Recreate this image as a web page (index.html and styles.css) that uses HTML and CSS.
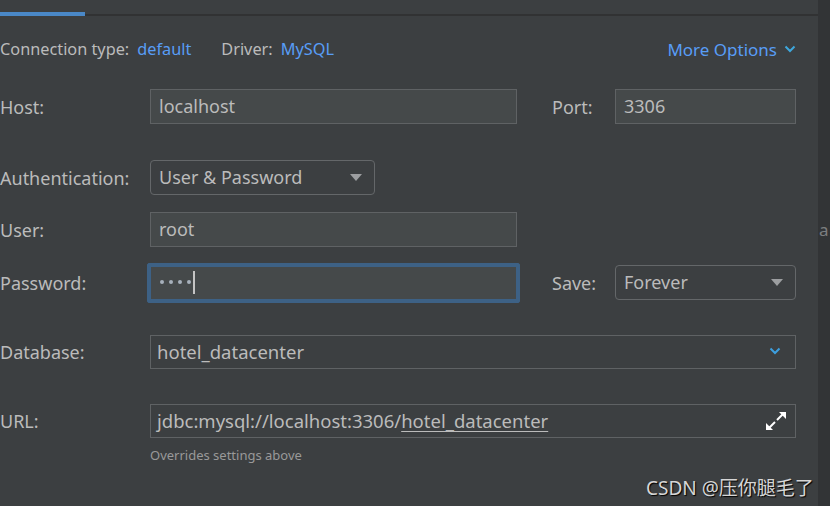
FILE: index.html
```html
<!DOCTYPE html>
<html>
  <head>
    <meta charset="utf-8"/>
    <title>Data Source</title>
    <link rel="stylesheet" href="styles.css">
  </head>
  <body>
  <div class="window">
    <div class="main">
      <div class="tabs">
        <div class="tab-active"></div>
        <div class="tab-line"></div>
      </div>

      <div class="typebar">
        <span class="lbl">Connection type:</span><span class="link">default</span>
        <span class="lbl driver">Driver:</span><span class="link">MySQL</span>
        <span class="more">More Options
          <svg width="12" height="8" viewBox="0 0 12 8"><path d="M1.5 1.5 L6 6 L10.5 1.5" fill="none" stroke="#3ea7dc" stroke-width="2"/></svg>
        </span>
      </div>

      <div class="row r-host">
        <label class="label">Host:</label>
        <div class="txt w-main">localhost</div>
        <label class="label side">Port:</label>
        <div class="txt w-side">3306</div>
      </div>

      <div class="row r-auth">
        <label class="label">Authentication:</label>
        <div class="sel w-auth">User &amp; Password<span class="tri"></span></div>
      </div>

      <div class="row r-user">
        <label class="label">User:</label>
        <div class="txt w-main">root</div>
      </div>

      <div class="row r-pass">
        <label class="label">Password:</label>
        <div class="focus">
          <div class="txt pass">
            <span class="dot"></span><span class="dot"></span><span class="dot"></span><span class="dot"></span><span class="caret"></span>
          </div>
        </div>
        <label class="label side">Save:</label>
        <div class="sel w-side">Forever<span class="tri"></span></div>
      </div>

      <div class="row r-db">
        <label class="label">Database:</label>
        <div class="combo w-wide">hotel_datacenter
          <svg class="chev" width="12" height="8" viewBox="0 0 12 8"><path d="M1.5 1.5 L6 6 L10.5 1.5" fill="none" stroke="#3d9fdf" stroke-width="2"/></svg>
        </div>
      </div>

      <div class="row r-url">
        <label class="label">URL:</label>
        <div class="combo w-wide">jdbc:mysql://localhost:3306/<u>hotel_datacenter</u>
          <svg class="expand" width="22" height="20" viewBox="0 0 22 20">
            <path d="M12 9 L18 3" stroke="#fff" stroke-width="2"/>
            <path d="M14 1 L21 1 L21 8 Z" fill="#fff"/>
            <path d="M10 11 L4 17" stroke="#fff" stroke-width="2"/>
            <path d="M1 12 L1 19 L8 19 Z" fill="#fff"/>
          </svg>
        </div>
      </div>
      <div class="hint">Overrides settings above</div>
    </div>
    <div class="strip"><span class="cut">a</span></div>
    <div class="watermark">CSDN @压你腿毛了</div>
  </div>
  </body>
</html>
```

FILE: styles.css
```css
body{
  margin: 0;
  background-color: #3c3f41;
  font-family: "Noto Sans", "Noto Sans CJK SC", sans-serif;
  font-size: 18px;
  color: #bbbbbb;
}
.window{
  display: flex;
  width: 830px;
  height: 506px;
  overflow: hidden;
  position: relative;
}
.main{
  width: 818px;
}
.strip{
  width: 12px;
  background-color: #323436;
  padding-top: 218px;
}
.cut{
  display: block;
  margin-left: 1px;
  color: #7c7e80;
  font-size: 17px;
}
.tabs{
  display: flex;
  height: 16px;
}
.tab-active{
  width: 85px;
  height: 4px;
  margin-top: 12px;
  background-color: #4a88c7;
}
.tab-line{
  flex: 1;
  height: 2px;
  margin-top: 14px;
  background-color: #313233;
}
.typebar{
  display: flex;
  align-items: center;
  height: 32px;
  margin-top: 17px;
  margin-right: 22px;
  font-size: 16.3px;
}
.lbl{
  margin-right: 8px;
}
.driver{
  margin-left: 30px;
}
.link{
  color: #589df6;
}
.more{
  margin-left: auto;
  color: #589df6;
  font-size: 17px;
  display: flex;
  align-items: center;
  gap: 7px;
}
.row{
  display: flex;
  align-items: center;
  height: 35px;
}
.r-host{ margin-top: 24px; }
.r-auth{ margin-top: 36px; }
.r-user{ margin-top: 17px; }
.r-pass{ margin-top: 18px; }
.r-db{ margin-top: 35px; height: 34px; }
.r-url{ margin-top: 35px; height: 34px; }
.label{
  width: 150px;
  flex: none;
}
.side{
  width: 63px;
  margin-left: 35px;
}
.txt, .sel, .combo{
  box-sizing: border-box;
  height: 35px;
  display: flex;
  align-items: center;
  padding: 0 8px 2px 8px;
  border: solid #5f6264 1px;
  flex: none;
}
.txt{
  background-color: #45494a;
}
.sel{
  border-radius: 4px;
  border-color: #646769;
}
.combo{
  height: 34px;
  padding-left: 6px;
  font-size: 18.5px;
}
.w-main{ width: 367px; }
.w-side{ width: 181px; }
.w-auth{ width: 225px; }
.w-wide{ width: 646px; }
.tri{
  margin-left: auto;
  margin-right: 4px;
  margin-top: 2px;
  width: 0;
  height: 0;
  border-left: 6px solid transparent;
  border-right: 6px solid transparent;
  border-top: 7px solid #9c9ea0;
}
.focus{
  margin-left: -3px;
  margin-right: -3px;
  padding: 2px;
  border: solid #3d6185 1px;
  border-radius: 2px;
  background-color: #3d6185;
}
.pass{
  width: 367px;
  height: 34px;
  border-color: #3d6185;
  padding-left: 9px;
  gap: 5px;
}
.dot{
  width: 4px;
  height: 4px;
  border-radius: 50%;
  background-color: #a7b0bb;
}
.caret{
  width: 2px;
  height: 23px;
  margin-left: -3px;
  margin-top: 2px;
  background-color: #c4c4c4;
}
.chev, .expand{
  margin-left: auto;
}
.chev{
  margin-right: 6px;
}
.expand{
  margin-top: 2px;
}
u{
  text-decoration-color: #bbbbbb;
  text-underline-offset: 3px;
}
.hint{
  margin-top: 8px;
  margin-left: 150px;
  font-size: 13px;
  color: #999999;
}
.watermark{
  position: absolute;
  left: 646px;
  top: 473px;
  font-size: 19px;
  color: #d6d6d6;
  text-shadow: 1px 1px 1px #000;
}
```
